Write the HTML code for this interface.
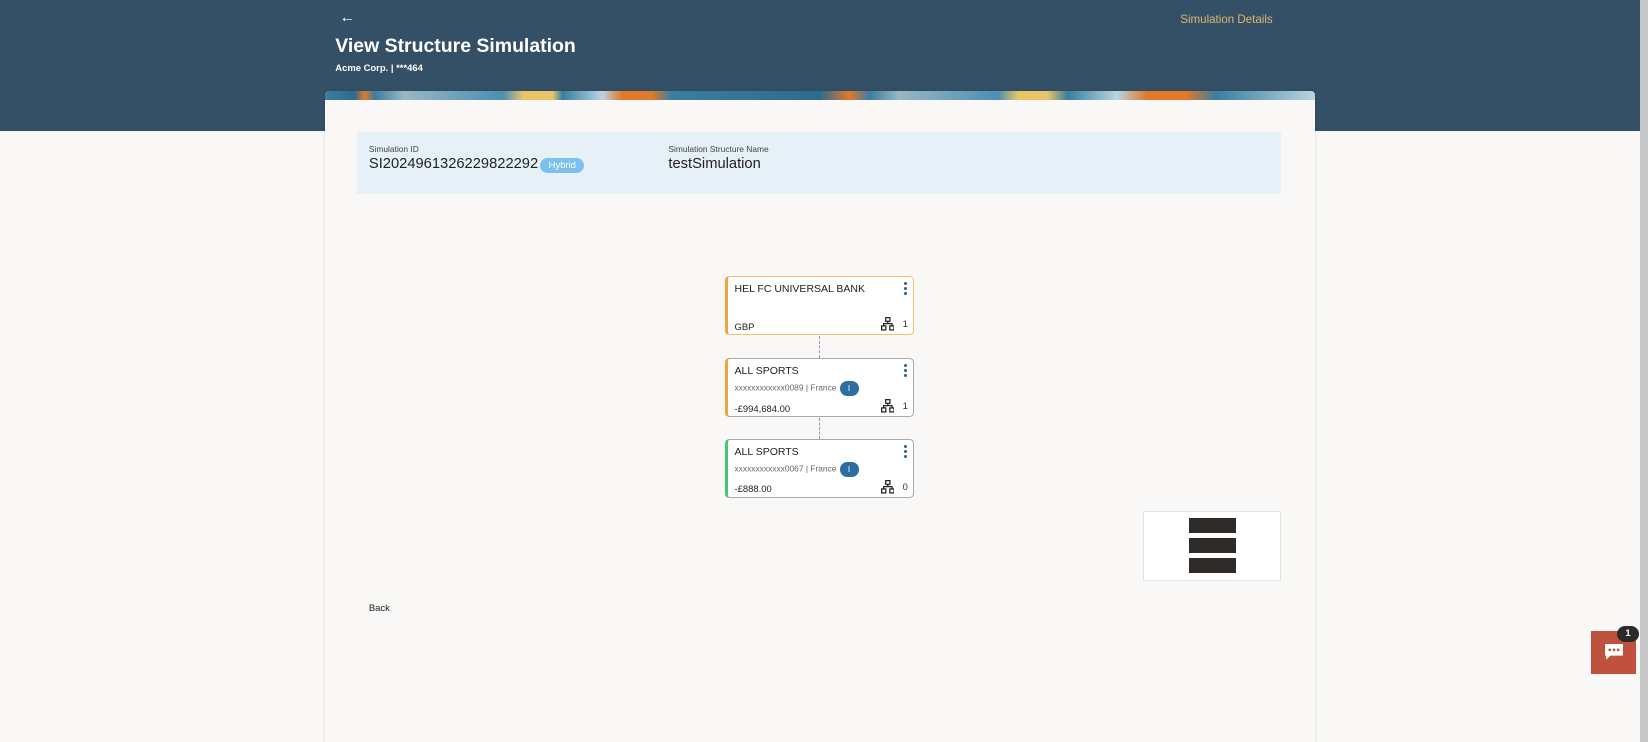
<!DOCTYPE html>
<html><head><meta charset="utf-8"><style>
html,body{margin:0;padding:0;width:1648px;height:742px;overflow:hidden;background:#f9f8f6;font-family:"Liberation Sans",sans-serif}
#w{zoom:1.051;position:relative;width:1568px;height:706px}
.a{position:absolute}
.hdr{left:0;top:0;width:1560px;height:125px;background:#335066}
.sb{left:1560px;top:0;width:8px;height:706px;background:#c8c8c8}
.card{left:309px;top:87px;width:942px;height:640px;background:#f9f8f6;box-shadow:0 0 3px rgba(0,0,0,.15);border-radius:4px 4px 0 0;overflow:hidden}
.ban{left:0;top:0;width:942px;height:8px;background:linear-gradient(90deg,#3a7ea0 0,#2d6b8f 3%,#e07a2a 4%,#3a7ea0 5%,#9ab6c5 8%,#4b8fb2 18%,#e8c46a 20%,#e8c46a 23%,#3a7ea0 24%,#b9d4e2 28%,#e07a2a 30%,#e07a2a 33%,#3a7ea0 35%,#2d6b8f 50%,#e07a2a 53%,#3a7ea0 55%,#9ab6c5 58%,#4b8fb2 68%,#e8c46a 70%,#e8c46a 73%,#3a7ea0 75%,#b9d4e2 80%,#e07a2a 83%,#e07a2a 87%,#3a7ea0 90%,#b9d4e2 100%)}
.info{left:340px;top:126px;width:879px;height:59px;background:#e6f0f7}
.lbl{font-size:8px;color:#444}
.val{font-size:14px;color:#222}
.node{left:690px;width:176px;height:54px;background:#fff;border:1px solid #aaa;border-radius:4px;box-sizing:content-box}
.node .t{position:absolute;left:6px;top:5px;font-size:10px;color:#222}
.node .s{position:absolute;left:6px;top:21px;font-size:8px;color:#666}
.node .b{position:absolute;left:6px;top:42px;font-size:9px;color:#222}
.dots{position:absolute;right:6px;top:4px;width:3px}
.dots i{display:block;width:3px;height:3px;background:#2d5f87;border-radius:50%;margin-bottom:2px}
.ic{position:absolute;right:18px;top:38px}
.cnt{position:absolute;right:5px;top:40px;font-size:9px;color:#333}
.iBtn{display:inline-block;width:18px;height:14px;border-radius:7px;background:#2d6ea0;color:#fff;font-size:8px;text-align:center;line-height:14px;vertical-align:middle;margin-left:3px}
.conn{left:779px;width:0;border-left:1px dashed #999}
</style></head><body><div id="w">
<div class="a hdr"></div>
<div class="a sb"></div>
<div class="a" style="left:323px;top:9px;color:#fff;font-size:15px">←</div>
<div class="a" style="left:319px;top:33px;color:#fff;font-size:18.5px;font-weight:bold">View Structure Simulation</div>
<div class="a" style="left:319px;top:60px;color:#fff;font-size:9px;font-weight:bold">Acme Corp. | ***464</div>
<div class="a" style="left:1123px;top:13px;color:#e2b56e;font-size:11px">Simulation Details</div>
<div class="a card"><div class="a ban"></div></div>
<div class="a info"></div>
<div class="a lbl" style="left:351px;top:137px">Simulation ID</div>
<div class="a val" style="left:351px;top:148px">SI2024961326229822292<span style="display:inline-block;background:#7cc0ef;color:#fff;font-size:9px;border-radius:8px;padding:2px 8px;margin-left:2px;vertical-align:middle;position:relative;top:2px">Hybrid</span></div>
<div class="a lbl" style="left:636px;top:137px">Simulation Structure Name</div>
<div class="a val" style="left:636px;top:148px">testSimulation</div>

<div class="a conn" style="top:320px;height:21px"></div>
<div class="a conn" style="top:398px;height:20px"></div>

<div class="a node" style="top:263px;border-color:#f5c070;border-left:3px solid #f0a53a;width:176px">
<div class="t">HEL FC UNIVERSAL BANK</div><div class="dots"><i></i><i></i><i></i></div>
<div class="b">GBP</div>
<svg class="ic" width="13" height="13" viewBox="0 0 13 13" fill="none" stroke="#222" stroke-width="1.2"><rect x="4.5" y="0.6" width="4" height="3.5"/><path d="M6.5 4.1V6.3M2.5 8.5V6.3H10.5V8.5"/><rect x="0.6" y="8.5" width="4" height="3.8"/><rect x="8.4" y="8.5" width="4" height="3.8"/></svg>
<div class="cnt">1</div></div>

<div class="a node" style="top:341px;border-left:3px solid #f0a53a">
<div class="t">ALL SPORTS</div><div class="dots"><i></i><i></i><i></i></div>
<div class="s">xxxxxxxxxxxx0089 | France<span class="iBtn">I</span></div>
<div class="b">-£994,684.00</div>
<svg class="ic" width="13" height="13" viewBox="0 0 13 13" fill="none" stroke="#222" stroke-width="1.2"><rect x="4.5" y="0.6" width="4" height="3.5"/><path d="M6.5 4.1V6.3M2.5 8.5V6.3H10.5V8.5"/><rect x="0.6" y="8.5" width="4" height="3.8"/><rect x="8.4" y="8.5" width="4" height="3.8"/></svg>
<div class="cnt">1</div></div>

<div class="a node" style="top:418px;border-left:3px solid #4cc36e">
<div class="t">ALL SPORTS</div><div class="dots"><i></i><i></i><i></i></div>
<div class="s">xxxxxxxxxxxx0067 | France<span class="iBtn">I</span></div>
<div class="b">-£888.00</div>
<svg class="ic" width="13" height="13" viewBox="0 0 13 13" fill="none" stroke="#222" stroke-width="1.2"><rect x="4.5" y="0.6" width="4" height="3.5"/><path d="M6.5 4.1V6.3M2.5 8.5V6.3H10.5V8.5"/><rect x="0.6" y="8.5" width="4" height="3.8"/><rect x="8.4" y="8.5" width="4" height="3.8"/></svg>
<div class="cnt">0</div></div>

<div class="a" style="left:1088px;top:486px;width:129px;height:65px;background:#fff;border:1px solid #e4e4e4"></div>
<div class="a" style="left:1131px;top:493px;width:45px;height:14px;background:#2f2b28"></div>
<div class="a" style="left:1131px;top:512px;width:45px;height:14px;background:#2f2b28"></div>
<div class="a" style="left:1131px;top:531px;width:45px;height:14px;background:#2f2b28"></div>

<div class="a" style="left:351px;top:574px;font-size:9px;color:#222">Back</div>

<div class="a" style="left:1514px;top:600px;width:43px;height:41px;background:#c0513e"></div>
<svg class="a" style="left:1526px;top:612px" width="19" height="17" viewBox="0 0 19 17"><path d="M1 1H18V12H6L2 16V12H1Z" fill="#fff"/><circle cx="5.5" cy="6.5" r="1.3" fill="#c0513e"/><circle cx="9.5" cy="6.5" r="1.3" fill="#c0513e"/><circle cx="13.5" cy="6.5" r="1.3" fill="#c0513e"/></svg>
<div class="a" style="left:1539px;top:596px;width:20px;height:15px;border-radius:8px;background:#2a2a2a;color:#fff;font-size:9px;font-weight:bold;text-align:center;line-height:15px">1</div>
</div></body></html>
